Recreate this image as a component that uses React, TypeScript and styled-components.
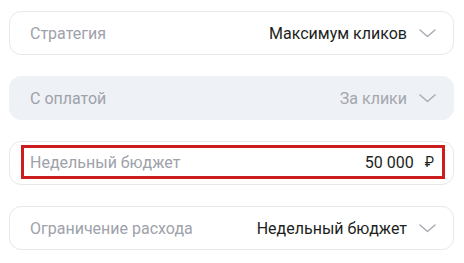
import styled, { createGlobalStyle } from 'styled-components'

const GlobalStyle = createGlobalStyle`
  html, body {
    margin: 0;
    padding: 0;
    background: #ffffff;
  }
  body {
    font-family: Roboto, "Noto Sans", "DejaVu Sans", sans-serif;
  }
`

const Page = styled.div`
  display: flex;
  flex-direction: column;
  gap: 21px;
  width: 464px;
  padding: 11px 10px 0 9px;
  box-sizing: border-box;
`

type FieldProps = {
  $muted?: boolean
  $framed?: boolean
}

const Field = styled.div<FieldProps>`
  display: flex;
  align-items: center;
  height: 44px;
  box-sizing: border-box;
  border-radius: 12px;
  border: 1px solid ${p => (p.$muted ? '#eef1f5' : '#e8e8ea')};
  background: ${p => (p.$muted ? '#eef1f5' : '#ffffff')};
  padding: ${p => (p.$framed ? '3px 8px 5px 11px' : '0 17px 0 20px')};
  font-size: 16px;
`

const Highlight = styled.div`
  flex: 1;
  align-self: stretch;
  display: flex;
  align-items: center;
  border: 3px solid #cc1e1e;
  padding: 0 8px 0 6px;
`

const Label = styled.span`
  flex: 1;
  color: #9ea2aa;
`

const Value = styled.span<{ $muted?: boolean }>`
  color: ${p => (p.$muted ? '#a3a7ae' : '#1d1f22')};
`

const Currency = styled.span`
  margin-left: 11px;
  color: #1d1f22;
  font-size: 14px;
`

const Chevron = styled.svg`
  margin-left: 12px;
  width: 17px;
  height: 9px;
  flex: none;
`

function Arrow() {
  return (
    <Chevron viewBox="0 0 17 9">
      <polyline points="1,1 8.5,7.5 16,1" fill="none" stroke="#a9adb4" strokeWidth="1.5" strokeLinejoin="round" strokeLinecap="round" />
    </Chevron>
  )
}

export default function App() {
  return (
    <>
      <GlobalStyle />
      <Page>
        <Field>
          <Label>Стратегия</Label>
          <Value>Максимум кликов</Value>
          <Arrow />
        </Field>
        <Field $muted>
          <Label>С оплатой</Label>
          <Value $muted>За клики</Value>
          <Arrow />
        </Field>
        <Field $framed>
          <Highlight>
            <Label>Недельный бюджет</Label>
            <Value>50 000</Value>
            <Currency>₽</Currency>
          </Highlight>
        </Field>
        <Field>
          <Label>Ограничение расхода</Label>
          <Value>Недельный бюджет</Value>
          <Arrow />
        </Field>
      </Page>
    </>
  )
}
